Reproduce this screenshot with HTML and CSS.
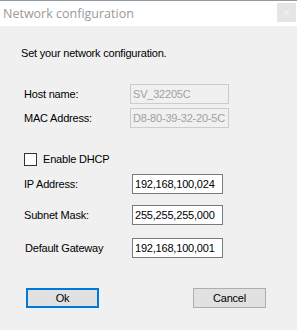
FILE: index.html
```html
<!DOCTYPE html>
<html>
<head>
<meta charset="utf-8">
<link rel="stylesheet" href="styles.css">
</head>
<body>
<div class="window">
  <div class="titlebar">
    <span class="title">Network configuration</span>
    <span class="close">&#x2715;</span>
  </div>
  <div class="content">
    <p class="intro">Set your network configuration.</p>
    <div class="row row-host">
      <span class="label">Host name:</span>
      <input class="field field-disabled" value="SV_32205C" disabled>
    </div>
    <div class="row row-mac">
      <span class="label">MAC Address:</span>
      <input class="field field-disabled" value="D8-80-39-32-20-5C" disabled>
    </div>
    <label class="check-row">
      <span class="checkbox"></span>
      <span class="check-label">Enable DHCP</span>
    </label>
    <div class="row row-ip">
      <span class="label">IP Address:</span>
      <input class="field field-ip" value="192,168,100,024">
    </div>
    <div class="row row-mask">
      <span class="label">Subnet Mask:</span>
      <input class="field field-ip" value="255,255,255,000">
    </div>
    <div class="row row-gw">
      <span class="label label-gw">Default Gateway</span>
      <input class="field field-ip" value="192,168,100,001">
    </div>
    <div class="buttons">
      <button class="btn btn-default">Ok</button>
      <button class="btn">Cancel</button>
    </div>
  </div>
</div>
</body>
</html>
```
FILE: styles.css
```css
html, body {
  margin: 0;
  padding: 0;
  background: #f0f0f0;
}
.window {
  width: 297px;
  height: 330px;
  display: flex;
  flex-direction: column;
  font-family: "Liberation Sans", Arial, sans-serif;
  font-size: 11px;
  letter-spacing: -0.2px;
  color: #000;
}
.titlebar {
  height: 25px;
  border-top: 1px solid #8e9ba6;
  background: #fff;
  display: flex;
  align-items: flex-start;
  justify-content: space-between;
  letter-spacing: 0;
}
.title {
  font-family: "Open Sans", sans-serif;
  font-size: 12.5px;
  color: #9a9a9a;
  margin: 4px 0 0 3px;
  line-height: 17px;
}
.close {
  width: 19px;
  height: 19px;
  margin: 2px 1px 0 0;
  background: #e5e5e5;
  color: #f4f4f4;
  font-size: 9px;
  display: flex;
  align-items: center;
  justify-content: center;
  font-family: "DejaVu Sans", sans-serif;
}
.content {
  flex: 1;
  background: #f0f0f0;
  padding: 0 0 0 24px;
  display: flex;
  flex-direction: column;
  align-items: flex-start;
}
.intro {
  margin: 21px 0 0 -3px;
  line-height: 13px;
}
.row {
  display: flex;
  align-items: center;
  height: 20px;
}
.label {
  line-height: 13px;
}
.row-host { margin-top: 24px; }
.row-mac { margin-top: 4px; }
.row-host .label, .row-mac .label { width: 106px; }
.row-ip .label, .row-mask .label, .row-gw .label { width: 108px; }
.label-gw { margin-left: 1px; width: 107px !important; }
.field {
  box-sizing: border-box;
  height: 20px;
  margin: 0;
  padding: 0 2px;
  font-family: "Liberation Sans", Arial, sans-serif;
  font-size: 11px;
  letter-spacing: -0.2px;
  outline: none;
}
.field-disabled {
  width: 99px;
  border: 1px solid #cccccc;
  background: #f0f0f0;
  color: #a0a0a0;
}
.field-ip {
  width: 91px;
  border: 1px solid #7a7a7a;
  background: #fff;
  color: #000;
}
.check-row {
  display: flex;
  align-items: center;
  margin-top: 25px;
  height: 13px;
}
.checkbox {
  box-sizing: border-box;
  width: 13px;
  height: 13px;
  border: 1px solid #333;
  background: #fff;
}
.check-label {
  margin-left: 6px;
  line-height: 13px;
}
.row-ip { margin-top: 8px; }
.row-mask { margin-top: 11px; }
.row-gw { margin-top: 13px; }
.buttons {
  display: flex;
  margin-top: 30px;
  margin-left: 2px;
  gap: 94px;
}
.btn {
  box-sizing: border-box;
  width: 73px;
  height: 20px;
  margin: 0;
  padding: 0;
  background: #e1e1e1;
  border: 1px solid #adadad;
  font-family: "Liberation Sans", Arial, sans-serif;
  font-size: 11px;
  letter-spacing: -0.2px;
  color: #000;
}
.btn-default {
  border: 2px solid #0078d7;
}
```
